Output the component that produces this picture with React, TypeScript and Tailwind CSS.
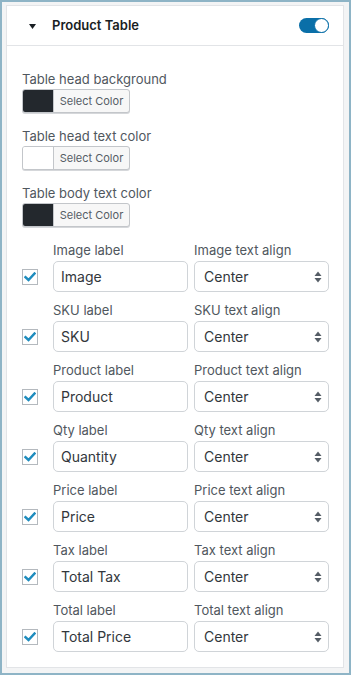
import React from "react";

const font = { fontFamily: "Inter, 'Noto Sans', sans-serif" };

function ColorField({ label, color }: { label: string; color: string }) {
  return (
    <div className="flex flex-col">
      <div className="text-[13px] leading-[18px] text-[#50575e] mb-[1px]">{label}</div>
      <div className="flex h-[24px] w-[108px] rounded-[3px] border border-[#c3c6ca] bg-[#f7f7f7] shadow-[0_1px_0_#d5d7da] overflow-hidden">
        <div className="w-[31px] h-full border-r border-[#c3c6ca]" style={{ background: color }} />
        <div className="flex-1 flex items-center justify-center text-[11px] text-[#555d66]">Select Color</div>
      </div>
    </div>
  );
}

function Check() {
  return (
    <div className="w-[16px] h-[16px] border border-[#b4b9be] bg-white flex items-center justify-center">
      <svg width="12" height="10" viewBox="0 0 12 10">
        <path d="M1.5 5.2 L4.5 8 L10.5 1.5" fill="none" stroke="#1e8cbe" strokeWidth="2.4" strokeLinecap="square" />
      </svg>
    </div>
  );
}

function Row({ name, value }: { name: string; value: string }) {
  return (
    <div className="grid grid-cols-[25px_135px_135px] gap-x-[6px]">
      <div />
      <div className="text-[13px] leading-[18px] text-[#50575e] mb-[2px]">{name} label</div>
      <div className="text-[13px] leading-[18px] text-[#50575e] mb-[2px]">{name} text align</div>
      <div className="flex items-center">
        <Check />
      </div>
      <div className="h-[31px] rounded-[5px] border border-[#d0d4d8] bg-white flex items-center px-[7px] text-[14px] text-[#32373c]">
        {value}
      </div>
      <div className="h-[31px] rounded-[5px] border border-[#d0d4d8] bg-white flex items-center justify-between pl-[9px] pr-[6px] text-[14px] text-[#32373c]">
        <span>Center</span>
        <svg width="8" height="12" viewBox="0 0 8 12">
          <path d="M4 0.5 L7.5 5 L0.5 5 Z" fill="#555d66" />
          <path d="M4 11.5 L7.5 7 L0.5 7 Z" fill="#555d66" />
        </svg>
      </div>
    </div>
  );
}

export default function App() {
  const rows: [string, string][] = [
    ["Image", "Image"],
    ["SKU", "SKU"],
    ["Product", "Product"],
    ["Qty", "Quantity"],
    ["Price", "Price"],
    ["Tax", "Total Tax"],
    ["Total", "Total Price"],
  ];
  return (
    <div style={font} className="w-[351px] h-[675px] border-2 border-[#8eb4c6] bg-[#f3f4f5] pt-[3px] pl-[4px] pr-[5px] pb-[5px]">
      <div className="h-full border border-[#e2e4e7] bg-white flex flex-col">
        <div className="h-[40px] border-b border-[#e2e4e7] flex items-center pl-[22px] pr-[14px]">
          <svg width="7" height="5" viewBox="0 0 7 5" className="mt-[1px]">
            <path d="M0 0 L7 0 L3.5 5 Z" fill="#191e23" />
          </svg>
          <div className="ml-[16px] text-[13px] font-semibold text-[#191e23]">Product Table</div>
          <div className="ml-auto relative w-[30px] h-[15px] rounded-full bg-[#0a6fa8]">
            <div className="absolute right-0 top-0 w-[15px] h-[15px] rounded-full bg-white border border-[#0a6fa8]" />
          </div>
        </div>
        <div className="pl-[15px] pr-[13px] pt-[24px] flex flex-col">
          <div className="flex flex-col gap-[14px]">
            <ColorField label="Table head background" color="#23282d" />
            <ColorField label="Table head text color" color="#ffffff" />
            <ColorField label="Table body text color" color="#23282d" />
          </div>
          <div className="mt-[14px] flex flex-col gap-[9px]">
            {rows.map(([n, v]) => (
              <Row key={n} name={n} value={v} />
            ))}
          </div>
        </div>
      </div>
    </div>
  );
}
